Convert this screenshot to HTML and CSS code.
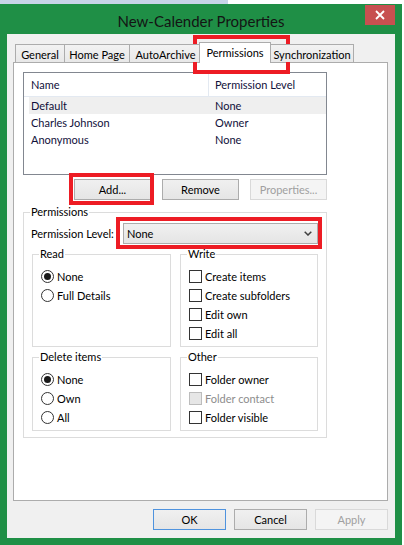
FILE: index.html
```html
<!DOCTYPE html>
<html>
<head>
<meta charset="utf-8">
<title>New-Calender Properties</title>
<link rel="stylesheet" href="styles.css">
</head>
<body>
<div class="desk"></div>
<div class="window">
  <div class="titlebar">
    <div class="title">New-Calender Properties</div>
    <div class="close">
      <svg width="10" height="10" viewBox="0 0 10 10"><path d="M1 1 L9 9 M9 1 L1 9" stroke="#fff" stroke-width="1.8" fill="none"/></svg>
    </div>
  </div>
  <div class="client">
    <div class="tabs">
      <div class="tab t-general">General</div>
      <div class="tab t-home">Home Page</div>
      <div class="tab t-auto">AutoArchive</div>
      <div class="tab t-perm selected">Permissions</div>
      <div class="tab t-sync">Synchronization</div>
    </div>
    <div class="panel">
      <div class="list">
        <div class="list-head">
          <div class="hcell">Name</div>
          <div class="hcell hcell2">Permission Level</div>
        </div>
        <div class="row sel"><div class="cell">Default</div><div class="cell">None</div></div>
        <div class="row"><div class="cell">Charles Johnson</div><div class="cell">Owner</div></div>
        <div class="row"><div class="cell">Anonymous</div><div class="cell">None</div></div>
      </div>
      <div class="btnrow">
        <div class="btn">Add...</div>
        <div class="btn">Remove</div>
        <div class="btn disabled">Properties...</div>
      </div>
      <fieldset class="group perms">
        <legend>Permissions</legend>
        <div class="level">
          <span class="level-label">Permission Level:</span>
          <div class="combo">
            <span>None</span>
            <svg width="8" height="5" viewBox="0 0 8 5"><path d="M0.7 0.7 L4 4 L7.3 0.7" stroke="#404040" stroke-width="1.5" fill="none"/></svg>
          </div>
        </div>
        <div class="subgrid">
          <fieldset class="group sub">
            <legend>Read</legend>
            <div class="opts">
              <div class="opt"><span class="radio on"></span><span>None</span></div>
              <div class="opt"><span class="radio"></span><span>Full Details</span></div>
            </div>
          </fieldset>
          <fieldset class="group sub">
            <legend>Write</legend>
            <div class="opts">
              <div class="opt"><span class="check"></span><span>Create items</span></div>
              <div class="opt"><span class="check"></span><span>Create subfolders</span></div>
              <div class="opt"><span class="check"></span><span>Edit own</span></div>
              <div class="opt"><span class="check"></span><span>Edit all</span></div>
            </div>
          </fieldset>
          <fieldset class="group sub">
            <legend>Delete items</legend>
            <div class="opts">
              <div class="opt"><span class="radio on"></span><span>None</span></div>
              <div class="opt"><span class="radio"></span><span>Own</span></div>
              <div class="opt"><span class="radio"></span><span>All</span></div>
            </div>
          </fieldset>
          <fieldset class="group sub">
            <legend>Other</legend>
            <div class="opts">
              <div class="opt"><span class="check"></span><span>Folder owner</span></div>
              <div class="opt off"><span class="check"></span><span>Folder contact</span></div>
              <div class="opt"><span class="check"></span><span>Folder visible</span></div>
            </div>
          </fieldset>
        </div>
      </fieldset>
    </div>
    <div class="footer">
      <div class="btn fbtn default">OK</div>
      <div class="btn fbtn">Cancel</div>
      <div class="btn fbtn disabled">Apply</div>
    </div>
  </div>
</div>
<div class="mark mark-tab"></div>
<div class="mark mark-add"></div>
<div class="mark mark-combo"></div>
</body>
</html>
```
FILE: styles.css
```css
html, body {
  margin: 0;
  padding: 0;
}
body {
  width: 404px;
  height: 545px;
  overflow: hidden;
  background: #ffffff;
  font-family: Lato, "Liberation Sans", sans-serif;
  font-size: 11px;
  color: #000;
}
.desk {
  height: 4px;
  background: linear-gradient(90deg, #c8d4e8 0, #c8d4e8 228px, #ffffff 228px);
}
.window {
  width: 402px;
  height: 541px;
  box-sizing: border-box;
  background: #1f8f46;
  padding: 0 7px 7px 7px;
  display: flex;
  flex-direction: column;
}
.titlebar {
  height: 30px;
  display: grid;
  grid-template-columns: 1fr auto 1fr;
  align-items: start;
}
.title {
  grid-column: 2;
  font-size: 15px;
  line-height: 28px;
  margin-top: 3px;
  color: #141414;
  white-space: nowrap;
}
.close {
  grid-column: 3;
  justify-self: end;
  margin-top: 1px;
  width: 30px;
  height: 20px;
  background: #c75050;
  display: flex;
  align-items: center;
  justify-content: center;
}
.client {
  flex: 1;
  background: #f0f0f0;
  padding: 8px 7px 0 6px;
  display: flex;
  flex-direction: column;
}
.tabs {
  display: flex;
  align-items: flex-end;
  height: 20px;
  margin-left: 2px;
  position: relative;
  z-index: 1;
}
.tab {
  box-sizing: border-box;
  height: 18px;
  border: 1px solid #acacac;
  border-bottom: 0;
  background: linear-gradient(#f2f2f2, #e8e8e8);
  margin-right: -1px;
  text-align: center;
  line-height: 19px;
  white-space: nowrap;
}
.t-general { width: 50px; }
.t-home { width: 66px; }
.t-auto { width: 73px; }
.t-perm { width: 72px; margin-left: -2px; }
.t-sync { width: 84px; }
.tab.selected {
  height: 21px;
  margin-bottom: -1px;
  background: #ffffff;
}
.panel {
  box-sizing: border-box;
  width: 375px;
  height: 439px;
  background: #ffffff;
  border: 1px solid #acacac;
  padding: 9px 0 0 9px;
}
.list {
  box-sizing: border-box;
  width: 304px;
  height: 103px;
  border: 1px solid #828790;
  background: #fff;
  color: #10103a;
}
.list-head {
  display: grid;
  grid-template-columns: 184px 1fr;
  height: 24px;
  box-sizing: border-box;
  border-bottom: 1px solid #e3e9f1;
}
.hcell {
  line-height: 23px;
  padding-left: 7px;
}
.hcell2 {
  border-left: 1px solid #e3e9f1;
  padding-left: 6px;
}
.row {
  display: grid;
  grid-template-columns: 184px 1fr;
  height: 17px;
  line-height: 17px;
  margin-left: 5px;
}
.row.sel {
  background: #efefef;
}
.cell {
  padding-left: 2px;
  white-space: nowrap;
}
.btnrow {
  display: flex;
  justify-content: flex-end;
  gap: 11px;
  width: 304px;
  margin-top: 4px;
}
.btn {
  box-sizing: border-box;
  width: 77px;
  height: 21px;
  border: 1px solid #acacac;
  background: linear-gradient(#f0f0f0, #e5e5e5);
  text-align: center;
  line-height: 20px;
  white-space: nowrap;
}
.btn.disabled {
  border-color: #d9d9d9;
  background: #f4f4f4;
  color: #a0a0a0;
}
.btn.default {
  border-color: #4f93de;
}
fieldset.group {
  margin: 0;
  padding: 0 0 6px 0;
  border: 1px solid #dcdcdc;
  min-width: 0;
}
fieldset.group legend {
  margin-left: 6px;
  padding: 0 1px;
  line-height: 14px;
}
.perms {
  width: 304px;
  box-sizing: border-box;
  margin-top: 5px !important;
}
.level {
  display: flex;
  align-items: center;
  height: 21px;
  margin-top: 4px;
  padding-left: 7px;
}
.level-label {
  width: 92px;
  white-space: nowrap;
}
.combo {
  box-sizing: border-box;
  width: 195px;
  height: 21px;
  border: 1px solid #acacac;
  background: linear-gradient(#f0f0f0, #e5e5e5);
  display: flex;
  align-items: center;
  justify-content: space-between;
  padding: 0 5px 0 3px;
}
.subgrid {
  display: grid;
  grid-template-columns: 139px 138px;
  column-gap: 9px;
  row-gap: 3px;
  margin: 3px 0 0 8px;
}
fieldset.sub {
  padding: 0 0 3px 0;
  box-sizing: border-box;
}
.opts {
  padding: 6px 0 0 8px;
}
.opt {
  display: flex;
  align-items: center;
  gap: 3px;
  height: 19px;
  white-space: nowrap;
}
.radio {
  width: 13px;
  height: 13px;
  box-sizing: border-box;
  border: 1px solid #333;
  border-radius: 50%;
  background: #fff;
  display: flex;
  align-items: center;
  justify-content: center;
  flex: none;
}
.radio.on::after {
  content: "";
  width: 7px;
  height: 7px;
  border-radius: 50%;
  background: #1a1a1a;
}
.check {
  width: 13px;
  height: 13px;
  box-sizing: border-box;
  border: 1px solid #333;
  background: #fff;
  flex: none;
}
.opt.off {
  color: #8d8d8d;
}
.opt.off .check {
  background: #e6e6e6;
  border-color: #bcbcbc;
}
.footer {
  display: flex;
  justify-content: flex-end;
  gap: 8px;
  margin-top: 8px;
}
.fbtn {
  width: 73px;
}
.mark {
  position: absolute;
  box-sizing: border-box;
  border: 4px solid #ed1c24;
}
.mark-tab {
  left: 193px;
  top: 35px;
  width: 97px;
  height: 39px;
}
.mark-add {
  left: 69px;
  top: 173px;
  width: 85px;
  height: 32px;
}
.mark-combo {
  left: 116px;
  top: 217px;
  width: 206px;
  height: 32px;
}
```
